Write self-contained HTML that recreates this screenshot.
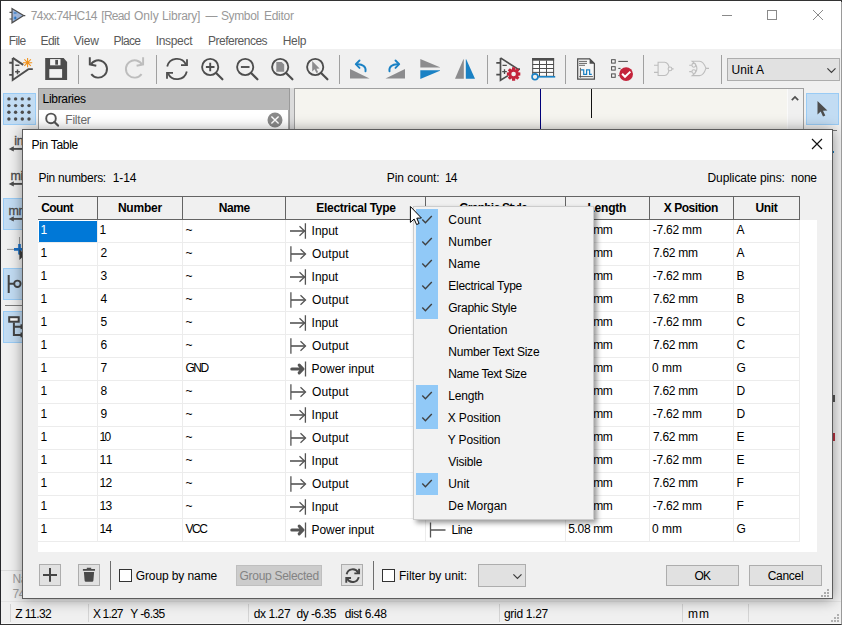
<!DOCTYPE html><html><head><meta charset="utf-8"><title>Symbol Editor</title><style>
*{box-sizing:border-box;margin:0;padding:0}
html,body{width:842px;height:625px;overflow:hidden;background:#f0f0f0}
body{position:relative;font-family:"Liberation Sans",sans-serif;font-size:12px;color:#000;line-height:14px}
.a{position:absolute}
.t{position:absolute;white-space:pre;line-height:14px;height:14px}
.b{font-weight:bold}
svg{position:absolute;overflow:visible}
</style></head><body>
<div class="a" style="left:1px;top:1px;width:840px;height:48px;background:#fff"></div>
<svg style="left:9px;top:8px" width="16" height="16" viewBox="0 0 16 16"><path d="M3 0.6 V14.8 L14.6 7.6 Z" fill="#9db3d6" stroke="#4d4d4d" stroke-width="1.2"/><path d="M0.5 4.4 H3 M0.5 11 H3 M14.6 7.6 H16.3" stroke="#4d4d4d" stroke-width="1.1"/><path d="M4.8 5 H7.6 M4.8 10 H7.6 M6.2 8.6 V11.4" stroke="#1a6fc4" stroke-width="1.1"/></svg>
<div class="t" style="left:30.80px;top:9.0px;letter-spacing:-0.610px;color:#999">74xx:74HC14</div>
<div class="t" style="left:101.30px;top:9.0px;letter-spacing:-0.750px;color:#999">[Read</div>
<div class="t" style="left:133.90px;top:9.0px;letter-spacing:0.100px;color:#999">Only</div>
<div class="t" style="left:162.10px;top:9.0px;letter-spacing:-0.243px;color:#999">Library]</div>
<div class="t" style="left:205.40px;top:9.0px;color:#999">—</div>
<div class="t" style="left:220.90px;top:9.0px;letter-spacing:-0.340px;color:#999">Symbol</div>
<div class="t" style="left:264.00px;top:9.0px;letter-spacing:-0.280px;color:#999">Editor</div>
<div class="t" style="left:8.70px;top:34.0px;letter-spacing:-0.633px;color:#5a5a5a">File</div>
<div class="t" style="left:40.50px;top:34.0px;letter-spacing:-0.533px;color:#5a5a5a">Edit</div>
<div class="t" style="left:73.70px;top:34.0px;letter-spacing:-0.167px;color:#5a5a5a">View</div>
<div class="t" style="left:113.60px;top:34.0px;letter-spacing:-0.650px;color:#5a5a5a">Place</div>
<div class="t" style="left:155.70px;top:34.0px;letter-spacing:-0.317px;color:#5a5a5a">Inspect</div>
<div class="t" style="left:208.00px;top:34.0px;letter-spacing:-0.510px;color:#5a5a5a">Preferences</div>
<div class="t" style="left:282.70px;top:34.0px;letter-spacing:-0.300px;color:#5a5a5a">Help</div>
<svg style="left:722px;top:10px" width="12" height="12" viewBox="0 0 12 12"><path d="M0 5.5 H10" stroke="#8a8a8a" stroke-width="1"/></svg>
<svg style="left:767px;top:10px" width="12" height="12" viewBox="0 0 12 12"><rect x="0.5" y="0.5" width="9" height="9" fill="none" stroke="#8a8a8a" stroke-width="1"/></svg>
<svg style="left:813px;top:10px" width="12" height="12" viewBox="0 0 12 12"><path d="M0 0 L10 10 M10 0 L0 10" stroke="#8a8a8a" stroke-width="1"/></svg>
<div class="a" style="left:1px;top:49px;width:840px;height:39px;background:#f0f0f0"></div>
<div class="a" style="left:78px;top:55px;width:1px;height:29px;background:#a0a0a0"></div>
<div class="a" style="left:156px;top:55px;width:1px;height:29px;background:#a0a0a0"></div>
<div class="a" style="left:339px;top:55px;width:1px;height:29px;background:#a0a0a0"></div>
<div class="a" style="left:487px;top:55px;width:1px;height:29px;background:#a0a0a0"></div>
<div class="a" style="left:565px;top:55px;width:1px;height:29px;background:#a0a0a0"></div>
<div class="a" style="left:643px;top:55px;width:1px;height:29px;background:#a0a0a0"></div>
<div class="a" style="left:721px;top:55px;width:1px;height:29px;background:#a0a0a0"></div>
<svg style="left:9px;top:57px" width="24" height="24" viewBox="0 0 24 24"><g fill="none" stroke="#4d4d4d" stroke-width="1.9" stroke-linejoin="miter"><path d="M3.7 0.9 V23 L19.4 12.1 H23.8"/><path d="M3.7 0.9 L14.2 7.9"/><path d="M0.2 5.8 H3.7 M0.2 17.9 H3.7"/></g><g stroke="#4d4d4d" stroke-width="1.5"><path d="M6.3 8.3 H10.4 M6.1 14.8 H10.9 M8.5 12.4 V17.2"/></g><circle cx="18.6" cy="5.7" r="2.2" fill="#f0f0f0"/><g stroke="#f09018" stroke-width="1.05"><path d="M18.6 1.1 V10.3 M14 5.7 H23.2 M15.35 2.45 L21.85 8.95 M21.85 2.45 L15.35 8.95"/></g></svg>
<svg style="left:44px;top:57px" width="24" height="24" viewBox="0 0 24 24"><path fill="#4d4d4d" d="M1.2 1 H19.6 L23.1 5 V22.9 H1.2 Z"/><rect x="5.3" y="12.1" width="12.8" height="8.7" fill="#f2f2f2"/><rect x="6.1" y="2.1" width="10.4" height="6.2" fill="#f2f2f2"/><rect x="11.25" y="2.9" width="2.75" height="4.8" fill="#4d4d4d"/></svg>
<svg style="left:87px;top:57px" width="24" height="24" viewBox="0 0 24 24"><g fill="none" stroke="#4d4d4d" stroke-width="1.95"><path d="M3.6 7.9 A8.7 8.7 0 1 1 4.3 17.1"/><path d="M2.8 0.2 V7.5 L9.3 8.8"/></g></svg>
<svg style="left:122px;top:57px" width="24" height="24" viewBox="0 0 24 24"><g transform="translate(23.9,0) scale(-1,1)" fill="none" stroke="#bdbdbd" stroke-width="1.95"><path d="M3.6 7.9 A8.7 8.7 0 1 1 4.3 17.1"/><path d="M2.8 0.2 V7.5 L9.3 8.8"/></g></svg>
<svg style="left:165px;top:57px" width="24" height="24" viewBox="0 0 24 24"><g fill="none" stroke="#4d4d4d" stroke-width="1.8"><path d="M2.2 9.5 A10 10 0 0 1 21 7.6"/><path d="M22 2.2 V8.2 H16"/><path d="M21.8 14.5 A10 10 0 0 1 3 16.4"/><path d="M2 21.8 V15.8 H8"/></g></svg>
<svg style="left:200px;top:57px" width="24" height="24" viewBox="0 0 24 24"><circle cx="10.2" cy="10" r="8.1" fill="none" stroke="#4d4d4d" stroke-width="1.85"/><path d="M16.1 16 L22.4 22.3" stroke="#4d4d4d" stroke-width="2.2" stroke-linecap="round"/><path d="M5.9 10 H14.5 M10.2 5.7 V14.3" stroke="#4d4d4d" stroke-width="1.9"/></svg>
<svg style="left:235px;top:57px" width="24" height="24" viewBox="0 0 24 24"><circle cx="10.2" cy="10" r="8.1" fill="none" stroke="#4d4d4d" stroke-width="1.85"/><path d="M16.1 16 L22.4 22.3" stroke="#4d4d4d" stroke-width="2.2" stroke-linecap="round"/><path d="M5.9 10 H14.5" stroke="#4d4d4d" stroke-width="1.9"/></svg>
<svg style="left:270px;top:57px" width="24" height="24" viewBox="0 0 24 24"><circle cx="10.2" cy="10" r="8.1" fill="none" stroke="#4d4d4d" stroke-width="1.85"/><path d="M16.1 16 L22.4 22.3" stroke="#4d4d4d" stroke-width="2.2" stroke-linecap="round"/><path d="M6.3 5 H11.6 L14.2 7.6 V14.8 H6.3 Z" fill="#8c8c8e"/></svg>
<svg style="left:305px;top:57px" width="24" height="24" viewBox="0 0 24 24"><circle cx="10.2" cy="10" r="8.1" fill="none" stroke="#4d4d4d" stroke-width="1.85"/><path d="M16.1 16 L22.4 22.3" stroke="#4d4d4d" stroke-width="2.2" stroke-linecap="round"/><path d="M7.2 4.1 L7.2 14.5 L9.6 12.3 L11.4 16.1 L13.2 15.3 L11.4 11.7 L14.6 11.5 Z" fill="#8c8c8e"/></svg>
<svg style="left:348px;top:57px" width="24" height="24" viewBox="0 0 24 24"><g><path d="M2 12 V21.5 H21.5 Z" fill="#8c8c8e"/><path d="M17.5 14.4 C18.4 10 14.5 7 9.5 7.2" fill="none" stroke="#1a81c4" stroke-width="1.9" stroke-linecap="round"/><path d="M11.5 3.5 L7.8 7.2 L11.5 10.9" fill="none" stroke="#1a81c4" stroke-width="1.9" stroke-linecap="round" stroke-linejoin="round"/></g></svg>
<svg style="left:383px;top:57px" width="24" height="24" viewBox="0 0 24 24"><g transform="translate(24,0) scale(-1,1)"><path d="M2 12 V21.5 H21.5 Z" fill="#8c8c8e"/><path d="M17.5 14.4 C18.4 10 14.5 7 9.5 7.2" fill="none" stroke="#1a81c4" stroke-width="1.9" stroke-linecap="round"/><path d="M11.5 3.5 L7.8 7.2 L11.5 10.9" fill="none" stroke="#1a81c4" stroke-width="1.9" stroke-linecap="round" stroke-linejoin="round"/></g></svg>
<svg style="left:418px;top:57px" width="24" height="24" viewBox="0 0 24 24"><path d="M2.3 2 L22 10.2 V10.6 H2.3 Z" fill="#8c8c8e"/><path d="M2.3 13.3 H22 V13.7 L2.3 21.9 Z" fill="#1a81c4"/></svg>
<svg style="left:453px;top:57px" width="24" height="24" viewBox="0 0 24 24"><path d="M2 21.7 H10.8 V2.3 H10.4 Z" fill="#8c8c8e"/><path d="M12.8 2.3 H13.2 L22 21.7 H12.8 Z" fill="#1a81c4"/></svg>
<svg style="left:496px;top:57px" width="24" height="24" viewBox="0 0 24 24"><g fill="none" stroke="#4d4d4d" stroke-width="1.7"><path d="M4.5 0.9 V23.2 L12 18.6 M4.5 0.9 L22 12.1 H24"/><path d="M0.3 5.8 H4.5 M0.3 17.7 H4.5"/></g><g stroke="#4d4d4d" stroke-width="1.3"><path d="M6.5 8.3 H10.8 M6.2 14.6 H10.8 M8.5 12.3 V16.9"/></g><path d="M24.32 15.43 L24.32 18.57 L22.37 18.63 L22.12 19.22 L23.46 20.64 L21.24 22.86 L19.82 21.52 L19.23 21.77 L19.17 23.72 L16.03 23.72 L15.97 21.77 L15.38 21.52 L13.96 22.86 L11.74 20.64 L13.08 19.22 L12.83 18.63 L10.88 18.57 L10.88 15.43 L12.83 15.37 L13.08 14.78 L11.74 13.36 L13.96 11.14 L15.38 12.48 L15.97 12.23 L16.03 10.28 L19.17 10.28 L19.23 12.23 L19.82 12.48 L21.24 11.14 L23.46 13.36 L22.12 14.78 L22.37 15.37 Z" fill="#c4243b"/><circle cx="17.6" cy="17" r="2.3" fill="#f0f0f0"/></svg>
<svg style="left:531px;top:57px" width="24" height="24" viewBox="0 0 24 24"><rect x="1.7" y="1.5" width="20.9" height="17.8" fill="#fbfbfb" stroke="#4d4d4d" stroke-width="1"/><rect x="1.2" y="1" width="21.9" height="2.7" fill="#4d4d4d"/><path d="M1.5 7.5 H23 M1.5 11.5 H23 M1.5 15.4 H23 M8.5 3.5 V19 M15.5 3.5 V19" fill="none" stroke="#4d4d4d" stroke-width="1"/><path d="M6.5 19.8 H24.2" stroke="#1a81c4" stroke-width="1.6"/><circle cx="4" cy="19.8" r="2.95" fill="#eeeeee" stroke="#1a81c4" stroke-width="1.6"/></svg>
<svg style="left:574px;top:57px" width="24" height="24" viewBox="0 0 24 24"><path d="M3.7 1.8 H15.7 L20.4 6.5 V22.1 H3.7 Z" fill="#f6f6f6" stroke="#4d4d4d" stroke-width="1.25"/><path d="M15.6 1.4 L21 6.8 H15.6 Z" fill="#4d4d4d"/><path d="M5 4.4 H13 M5 6.4 H13 M5 8.3 H11" stroke="#4d4d4d" stroke-width="0.85"/><path d="M6.4 10.8 V20.7 M5.2 19.6 H18.9" fill="none" stroke="#4d4d4d" stroke-width="0.9"/><path d="M7 12.9 H9.7 V17.4 H12.6 V12.9 H15.6 V17.4 H17.8" fill="none" stroke="#1a81c4" stroke-width="1.2"/></svg>
<svg style="left:609px;top:57px" width="24" height="24" viewBox="0 0 24 24"><g fill="#f8f8f8" stroke="#4d4d4d" stroke-width="1"><rect x="2.6" y="2.7" width="3.6" height="3.4"/><rect x="2.6" y="9.7" width="3.6" height="3.4"/><rect x="2.6" y="16.9" width="3.6" height="3.4"/><path d="M9.3 4.4 H18.9 M9.3 11.4 H11.5 M9.3 18.6 H10.5"/></g><circle cx="17.1" cy="17.1" r="6.9" fill="#c4243b"/><path d="M13.1 16.8 L16 19.8 L21.4 14.6" fill="none" stroke="#fff" stroke-width="2"/></svg>
<svg style="left:652px;top:57px" width="24" height="24" viewBox="0 0 24 24"><g fill="none" stroke="#bdbdbd" stroke-width="1.1"><path d="M6.1 5.2 H12.6 A4.6 6.65 0 0 1 12.6 18.5 H6.1 Z"/><path d="M2 8.3 H6.1 M2 15.4 H6.1 M19.9 11.9 H21.6"/><circle cx="18" cy="11.9" r="1.9" fill="#f0f0f0"/></g></svg>
<svg style="left:687px;top:57px" width="24" height="24" viewBox="0 0 24 24"><g fill="none" stroke="#bdbdbd" stroke-width="1.1"><path d="M5.2 4.2 H12.5 C15.5 4.2 17.8 8 18.9 11.4 C17.8 14.9 15.5 18.6 12.5 18.6 H5.2 Q14.6 11.4 5.2 4.2 Z"/><path d="M2.2 8.3 H4.9 M2.2 14.6 H4.9 M18.9 11.4 H22"/><circle cx="6.8" cy="8.3" r="1.9" fill="#f0f0f0"/><circle cx="6.8" cy="14.6" r="1.9" fill="#f0f0f0"/></g></svg>
<div class="a" style="left:727px;top:58px;width:113px;height:23px;background:#e1e1e1;border:1px solid #adadad"></div>
<div class="t" style="left:731.60px;top:63.0px;letter-spacing:0.080px;">Unit A</div>
<svg style="left:826.7px;top:67.5px" width="9" height="6" viewBox="0 0 9 6"><path d="M0.4 0.4 L4.45 4.5 L8.5 0.4" fill="none" stroke="#3c3c3c" stroke-width="1.2"/></svg>
<div class="a" style="left:3px;top:93px;width:33px;height:32px;background:#c2dcf3;border:1px solid #99cbf5"></div>
<svg style="left:6px;top:95px" width="28" height="28" viewBox="0 0 28 28"><circle cx="2.9" cy="3.9" r="1.7" fill="#4d4d4d"/><circle cx="2.9" cy="10.6" r="1.7" fill="#4d4d4d"/><circle cx="2.9" cy="17.3" r="1.7" fill="#4d4d4d"/><circle cx="2.9" cy="24.0" r="1.7" fill="#4d4d4d"/><circle cx="9.6" cy="3.9" r="1.7" fill="#4d4d4d"/><circle cx="9.6" cy="10.6" r="1.7" fill="#4d4d4d"/><circle cx="9.6" cy="17.3" r="1.7" fill="#4d4d4d"/><circle cx="9.6" cy="24.0" r="1.7" fill="#4d4d4d"/><circle cx="16.3" cy="3.9" r="1.7" fill="#4d4d4d"/><circle cx="16.3" cy="10.6" r="1.7" fill="#4d4d4d"/><circle cx="16.3" cy="17.3" r="1.7" fill="#4d4d4d"/><circle cx="16.3" cy="24.0" r="1.7" fill="#4d4d4d"/><circle cx="23.0" cy="3.9" r="1.7" fill="#4d4d4d"/><circle cx="23.0" cy="10.6" r="1.7" fill="#4d4d4d"/><circle cx="23.0" cy="17.3" r="1.7" fill="#4d4d4d"/><circle cx="23.0" cy="24.0" r="1.7" fill="#4d4d4d"/></svg>
<div class="t" style="left:14.20px;top:134.0px;letter-spacing:-0.300px;font-size:12.5px;color:#4d4d4d;-webkit-text-stroke:0.3px #4d4d4d">inch</div>
<svg style="left:8px;top:146px" width="20" height="7" viewBox="0 0 20 7"><path d="M3 2.9 H20" stroke="#4d4d4d" stroke-width="1.9"/><path d="M5.8 0.3 L0.7 2.9 L5.8 5.5 Z" fill="#4d4d4d"/></svg>
<div class="t" style="left:10.50px;top:169.0px;letter-spacing:-0.300px;font-size:12.5px;color:#4d4d4d;-webkit-text-stroke:0.3px #4d4d4d">mil</div>
<svg style="left:8px;top:181px" width="20" height="7" viewBox="0 0 20 7"><path d="M3 2.9 H20" stroke="#4d4d4d" stroke-width="1.9"/><path d="M5.8 0.3 L0.7 2.9 L5.8 5.5 Z" fill="#4d4d4d"/></svg>
<div class="a" style="left:3px;top:198px;width:33px;height:32px;background:#c2dcf3;border:1px solid #99cbf5"></div>
<div class="t" style="left:8.50px;top:204.0px;letter-spacing:-0.300px;font-size:12.5px;color:#4d4d4d;-webkit-text-stroke:0.3px #4d4d4d">mm</div>
<svg style="left:8px;top:216px" width="20" height="7" viewBox="0 0 20 7"><path d="M3 2.9 H20" stroke="#4d4d4d" stroke-width="1.9"/><path d="M5.8 0.3 L0.7 2.9 L5.8 5.5 Z" fill="#4d4d4d"/></svg>
<svg style="left:6px;top:236px" width="24" height="24" viewBox="0 0 24 24"><path d="M1 13.4 H20 M13.5 1 V19" stroke="#8c8c8c" stroke-width="0.9"/><path d="M8 13.4 H19 M13.5 8 V18.5" stroke="#1a6fc4" stroke-width="2.6"/><path d="M13.4 13.6 V24 L16 21.5 L18 25.5 L20 24.5 L18.2 20.8 L21.5 20.6 Z" fill="#3c3c3c"/></svg>
<div class="a" style="left:3px;top:268px;width:33px;height:32px;background:#c2dcf3;border:1px solid #99cbf5"></div>
<svg style="left:6px;top:272px" width="24" height="24" viewBox="0 0 24 24"><path d="M2.7 3 V21 M2.7 11.8 H8" stroke="#444" stroke-width="2" fill="none"/><circle cx="11.4" cy="11.8" r="3.2" fill="none" stroke="#444" stroke-width="1.9"/></svg>
<div class="a" style="left:5px;top:305px;width:28px;height:1px;background:#7a7a7a"></div>
<div class="a" style="left:3px;top:311px;width:33px;height:32px;background:#c2dcf3;border:1px solid #99cbf5"></div>
<svg style="left:6px;top:314px" width="24" height="24" viewBox="0 0 24 24"><rect x="3.2" y="3.2" width="9.5" height="4.5" fill="#fff" stroke="#444" stroke-width="2"/><path d="M7.9 8.5 V20.9 H15 M7.9 12.7 H15" stroke="#444" stroke-width="2" fill="none"/><rect x="14.5" y="10.3" width="6" height="4.8" fill="#444"/><rect x="14.5" y="18.5" width="6" height="4.8" fill="#444"/></svg>
<div class="a" style="left:38px;top:88px;width:252px;height:60px;background:#b9b9b9;border:1px solid #9a9a9a"></div>
<div class="t" style="left:42.60px;top:92.0px;letter-spacing:-0.325px;">Libraries</div>
<div class="a" style="left:39px;top:110px;width:250px;height:40px;background:#fff"></div>
<svg style="left:44px;top:112px" width="16" height="16" viewBox="0 0 16 16"><circle cx="7" cy="6.4" r="4.8" fill="none" stroke="#555" stroke-width="1.9"/><path d="M10.4 9.9 L14 13.6" stroke="#555" stroke-width="2.2" stroke-linecap="round"/></svg>
<div class="t" style="left:65.30px;top:113.0px;letter-spacing:-0.220px;color:#6d6d6d">Filter</div>
<svg style="left:266.6px;top:112.3px" width="16" height="16" viewBox="0 0 16 16"><circle cx="8" cy="8" r="7.5" fill="#8a8a8a"/><path d="M4.4 4.4 L11.6 11.6 M11.6 4.4 L4.4 11.6" stroke="#fff" stroke-width="1.4"/></svg>
<div class="a" style="left:288px;top:110px;width:1px;height:20px;background:#a8a8a8"></div>
<div class="a" style="left:290px;top:88px;width:4px;height:60px;background:#dcdcdc"></div>
<div class="a" style="left:294px;top:88px;width:510px;height:500px;background:#f5f4ef;border:1px solid #a0a0a0"></div>
<div class="a" style="left:540px;top:89px;width:1px;height:60px;background:#00007a;width:1.3px"></div>
<div class="a" style="left:591px;top:89px;width:1px;height:29px;background:#111;width:1.3px"></div>
<div class="a" style="left:787px;top:89px;width:16px;height:480px;background:#f0f0f0;border-left:1px solid #fafafa"></div>
<svg style="left:791px;top:95px" width="8" height="7" viewBox="0 0 8 7"><path d="M0.8 5.2 L4 2 L7.2 5.2" fill="none" stroke="#505050" stroke-width="1.7"/></svg>
<div class="a" style="left:806px;top:93px;width:33px;height:32px;background:#c2dcf3;border:1px solid #99cbf5"></div>
<svg style="left:811px;top:97px" width="24" height="24" viewBox="0 0 24 24"><path d="M6.5 4 V17.6 L9.7 14.6 L12 19.6 L14.3 18.6 L12 13.8 L16.4 13.6 Z" fill="#4d4d4d"/></svg>
<div class="a" style="left:833px;top:130px;width:4px;height:1px;background:#777"></div>
<div class="a" style="left:833px;top:151px;width:1px;height:2px;background:#1a81c4"></div>
<div class="a" style="left:833px;top:395px;width:2px;height:7px;background:#555"></div>
<div class="a" style="left:833px;top:433px;width:2px;height:8px;background:#b8323f"></div>
<div class="t" style="left:12.50px;top:572.0px;letter-spacing:-0.300px;color:#a0a0a0">Name</div>
<div class="t" style="left:12.50px;top:587.0px;letter-spacing:-0.300px;color:#a0a0a0">74HC14</div>
<div class="a" style="left:1px;top:570px;width:21px;height:1px;background:#dcdcdc"></div>
<div class="a" style="left:1px;top:601px;width:840px;height:1px;background:#e4e4e4"></div>
<div class="a" style="left:1px;top:602px;width:840px;height:22px;background:#f0f0f0"></div>
<div class="a" style="left:10px;top:604px;width:1px;height:18px;background:#d4d4d4"></div>
<div class="a" style="left:88px;top:604px;width:1px;height:18px;background:#d4d4d4"></div>
<div class="a" style="left:248px;top:604px;width:1px;height:18px;background:#d4d4d4"></div>
<div class="a" style="left:499px;top:604px;width:1px;height:18px;background:#d4d4d4"></div>
<div class="a" style="left:682px;top:604px;width:1px;height:18px;background:#d4d4d4"></div>
<div class="a" style="left:748px;top:604px;width:1px;height:18px;background:#d4d4d4"></div>
<div class="t" style="left:15.30px;top:607.0px;letter-spacing:-0.567px;">Z 11.32</div>
<div class="t" style="left:92.90px;top:607.0px;letter-spacing:-0.820px;">X 1.27</div>
<div class="t" style="left:130.30px;top:607.0px;letter-spacing:-0.600px;">Y -6.35</div>
<div class="t" style="left:253.70px;top:607.0px;letter-spacing:-0.417px;">dx 1.27</div>
<div class="t" style="left:296.50px;top:607.0px;letter-spacing:-0.486px;">dy -6.35</div>
<div class="t" style="left:344.70px;top:607.0px;letter-spacing:-0.387px;">dist 6.48</div>
<div class="t" style="left:504.00px;top:607.0px;letter-spacing:-0.312px;">grid 1.27</div>
<div class="t" style="left:688.00px;top:607.0px;letter-spacing:1.000px;">mm</div>
<svg style="left:831px;top:614px" width="8" height="8" viewBox="0 0 8 8"><rect x="6" y="0" width="2" height="2" fill="#b0b0b0"/><rect x="3" y="3" width="2" height="2" fill="#b0b0b0"/><rect x="6" y="3" width="2" height="2" fill="#b0b0b0"/><rect x="0" y="6" width="2" height="2" fill="#b0b0b0"/><rect x="3" y="6" width="2" height="2" fill="#b0b0b0"/><rect x="6" y="6" width="2" height="2" fill="#b0b0b0"/></svg>
<div class="a" style="left:22px;top:129px;width:811px;height:470px;background:#f0f0f0;border:1px solid #5c5c5c;box-shadow:0 1px 13px rgba(0,0,0,0.40)"></div>
<div class="a" style="left:23px;top:130px;width:809px;height:30px;background:#fff"></div>
<div class="t" style="left:31.60px;top:138.0px;letter-spacing:-0.325px;">Pin Table</div>
<svg style="left:811px;top:138px" width="12" height="12" viewBox="0 0 12 12"><path d="M1 1 L11 11 M11 1 L1 11" stroke="#111" stroke-width="1.15"/></svg>
<div class="t" style="left:38.50px;top:171.0px;letter-spacing:-0.273px;">Pin numbers:</div>
<div class="t" style="left:112.80px;top:171.0px;letter-spacing:-0.167px;">1-14</div>
<div class="t" style="left:386.70px;top:171.0px;letter-spacing:-0.044px;">Pin count:</div>
<div class="t" style="left:445.00px;top:171.0px;letter-spacing:-1.000px;">14</div>
<div class="t" style="left:707.50px;top:171.0px;letter-spacing:-0.093px;">Duplicate pins:</div>
<div class="t" style="left:791.10px;top:171.0px;letter-spacing:-0.267px;">none</div>
<div class="a" style="left:38px;top:220px;width:779px;height:332px;background:#fff"></div>
<div class="a" style="left:38px;top:196px;width:762px;height:24px;background:#f0f0f0;border-top:1px solid #646464;border-bottom:1px solid #646464"></div>
<div class="a" style="left:97px;top:196px;width:1px;height:24px;background:#646464"></div>
<div class="a" style="left:182px;top:196px;width:1px;height:24px;background:#646464"></div>
<div class="a" style="left:285px;top:196px;width:1px;height:24px;background:#646464"></div>
<div class="a" style="left:425px;top:196px;width:1px;height:24px;background:#646464"></div>
<div class="a" style="left:565px;top:196px;width:1px;height:24px;background:#646464"></div>
<div class="a" style="left:649px;top:196px;width:1px;height:24px;background:#646464"></div>
<div class="a" style="left:733px;top:196px;width:1px;height:24px;background:#646464"></div>
<div class="a" style="left:799px;top:196px;width:1px;height:24px;background:#646464"></div>
<div class="t b" style="left:41.30px;top:201.0px;letter-spacing:-0.625px;">Count</div>
<div class="t b" style="left:117.90px;top:201.0px;letter-spacing:-0.220px;">Number</div>
<div class="t b" style="left:218.80px;top:201.0px;letter-spacing:-0.467px;">Name</div>
<div class="t b" style="left:316.30px;top:201.0px;letter-spacing:-0.300px;">Electrical Type</div>
<div class="t b" style="left:459.20px;top:201.0px;letter-spacing:-0.733px;">Graphic Style</div>
<div class="t b" style="left:587.50px;top:201.0px;letter-spacing:-0.220px;">Length</div>
<div class="t b" style="left:663.80px;top:201.0px;letter-spacing:-0.467px;">X Position</div>
<div class="t b" style="left:755.50px;top:201.0px;letter-spacing:-0.333px;">Unit</div>
<div class="a" style="left:38px;top:242px;width:762px;height:1px;background:#ececec"></div>
<div class="a" style="left:38px;top:265px;width:762px;height:1px;background:#ececec"></div>
<div class="a" style="left:38px;top:288px;width:762px;height:1px;background:#ececec"></div>
<div class="a" style="left:38px;top:311px;width:762px;height:1px;background:#ececec"></div>
<div class="a" style="left:38px;top:334px;width:762px;height:1px;background:#ececec"></div>
<div class="a" style="left:38px;top:357px;width:762px;height:1px;background:#ececec"></div>
<div class="a" style="left:38px;top:380px;width:762px;height:1px;background:#ececec"></div>
<div class="a" style="left:38px;top:403px;width:762px;height:1px;background:#ececec"></div>
<div class="a" style="left:38px;top:426px;width:762px;height:1px;background:#ececec"></div>
<div class="a" style="left:38px;top:449px;width:762px;height:1px;background:#ececec"></div>
<div class="a" style="left:38px;top:472px;width:762px;height:1px;background:#ececec"></div>
<div class="a" style="left:38px;top:495px;width:762px;height:1px;background:#ececec"></div>
<div class="a" style="left:38px;top:518px;width:762px;height:1px;background:#ececec"></div>
<div class="a" style="left:38px;top:541px;width:762px;height:1px;background:#ececec"></div>
<div class="a" style="left:97px;top:220px;width:1px;height:322px;background:#ececec"></div>
<div class="a" style="left:182px;top:220px;width:1px;height:322px;background:#ececec"></div>
<div class="a" style="left:285px;top:220px;width:1px;height:322px;background:#ececec"></div>
<div class="a" style="left:425px;top:220px;width:1px;height:322px;background:#ececec"></div>
<div class="a" style="left:565px;top:220px;width:1px;height:322px;background:#ececec"></div>
<div class="a" style="left:649px;top:220px;width:1px;height:322px;background:#ececec"></div>
<div class="a" style="left:733px;top:220px;width:1px;height:322px;background:#ececec"></div>
<div class="a" style="left:799px;top:220px;width:1px;height:322px;background:#ececec"></div>
<div class="a" style="left:39px;top:221px;width:58px;height:21px;background:#0078d7"></div>
<div class="t" style="left:40.60px;top:223.0px;color:#fff">1</div>
<div class="t" style="left:99.50px;top:223.0px;">1</div>
<div class="t" style="left:185.60px;top:223.0px;">~</div>
<svg style="left:290px;top:223px" width="16" height="16" viewBox="0 0 16 16"><path d="M0 8 H14.6" fill="none" stroke="#555" stroke-width="1.6"/><path d="M9.5 3.3 L14.5 8 L9.5 12.7 M15.4 0.2 V15.8" fill="none" stroke="#555" stroke-width="1.3"/></svg>
<div class="t" style="left:311.60px;top:224.0px;letter-spacing:-0.025px;">Input</div>
<svg style="left:430px;top:223px" width="16" height="16" viewBox="0 0 16 16"><path d="M0.5 0.5 V15.5 M0.5 8 H15.5" fill="none" stroke="#555" stroke-width="1.3"/></svg>
<div class="t" style="left:451.60px;top:224.0px;letter-spacing:-0.533px;">Line</div>
<div class="t" style="left:568.30px;top:223.0px;letter-spacing:-0.367px;">5.08 mm</div>
<div class="t" style="left:652.80px;top:223.0px;letter-spacing:-0.229px;">-7.62 mm</div>
<div class="t" style="left:736.50px;top:223.0px;">A</div>
<div class="t" style="left:40.60px;top:246.0px;">1</div>
<div class="t" style="left:100.50px;top:246.0px;">2</div>
<div class="t" style="left:185.60px;top:246.0px;">~</div>
<svg style="left:290px;top:246px" width="16" height="16" viewBox="0 0 16 16"><path d="M1 8 H15.3" fill="none" stroke="#555" stroke-width="1.6"/><path d="M0.9 0.2 V15.8 M10.5 3.3 L15.5 8 L10.5 12.7" fill="none" stroke="#555" stroke-width="1.3"/></svg>
<div class="t" style="left:312.00px;top:247.0px;letter-spacing:0.100px;">Output</div>
<svg style="left:430px;top:246px" width="16" height="16" viewBox="0 0 16 16"><path d="M0.5 0.5 V15.5 M0.5 8 H15.5" fill="none" stroke="#555" stroke-width="1.3"/></svg>
<div class="t" style="left:451.60px;top:247.0px;letter-spacing:-0.533px;">Line</div>
<div class="t" style="left:568.30px;top:246.0px;letter-spacing:-0.367px;">5.08 mm</div>
<div class="t" style="left:653.00px;top:246.0px;letter-spacing:-0.300px;">7.62 mm</div>
<div class="t" style="left:736.50px;top:246.0px;">A</div>
<div class="t" style="left:40.60px;top:269.0px;">1</div>
<div class="t" style="left:100.50px;top:269.0px;">3</div>
<div class="t" style="left:185.60px;top:269.0px;">~</div>
<svg style="left:290px;top:269px" width="16" height="16" viewBox="0 0 16 16"><path d="M0 8 H14.6" fill="none" stroke="#555" stroke-width="1.6"/><path d="M9.5 3.3 L14.5 8 L9.5 12.7 M15.4 0.2 V15.8" fill="none" stroke="#555" stroke-width="1.3"/></svg>
<div class="t" style="left:311.60px;top:270.0px;letter-spacing:-0.025px;">Input</div>
<svg style="left:430px;top:269px" width="16" height="16" viewBox="0 0 16 16"><path d="M0.5 0.5 V15.5 M0.5 8 H15.5" fill="none" stroke="#555" stroke-width="1.3"/></svg>
<div class="t" style="left:451.60px;top:270.0px;letter-spacing:-0.533px;">Line</div>
<div class="t" style="left:568.30px;top:269.0px;letter-spacing:-0.367px;">5.08 mm</div>
<div class="t" style="left:652.80px;top:269.0px;letter-spacing:-0.229px;">-7.62 mm</div>
<div class="t" style="left:736.50px;top:269.0px;">B</div>
<div class="t" style="left:40.60px;top:292.0px;">1</div>
<div class="t" style="left:100.50px;top:292.0px;">4</div>
<div class="t" style="left:185.60px;top:292.0px;">~</div>
<svg style="left:290px;top:292px" width="16" height="16" viewBox="0 0 16 16"><path d="M1 8 H15.3" fill="none" stroke="#555" stroke-width="1.6"/><path d="M0.9 0.2 V15.8 M10.5 3.3 L15.5 8 L10.5 12.7" fill="none" stroke="#555" stroke-width="1.3"/></svg>
<div class="t" style="left:312.00px;top:293.0px;letter-spacing:0.100px;">Output</div>
<svg style="left:430px;top:292px" width="16" height="16" viewBox="0 0 16 16"><path d="M0.5 0.5 V15.5 M0.5 8 H15.5" fill="none" stroke="#555" stroke-width="1.3"/></svg>
<div class="t" style="left:451.60px;top:293.0px;letter-spacing:-0.533px;">Line</div>
<div class="t" style="left:568.30px;top:292.0px;letter-spacing:-0.367px;">5.08 mm</div>
<div class="t" style="left:653.00px;top:292.0px;letter-spacing:-0.300px;">7.62 mm</div>
<div class="t" style="left:736.50px;top:292.0px;">B</div>
<div class="t" style="left:40.60px;top:315.0px;">1</div>
<div class="t" style="left:100.50px;top:315.0px;">5</div>
<div class="t" style="left:185.60px;top:315.0px;">~</div>
<svg style="left:290px;top:315px" width="16" height="16" viewBox="0 0 16 16"><path d="M0 8 H14.6" fill="none" stroke="#555" stroke-width="1.6"/><path d="M9.5 3.3 L14.5 8 L9.5 12.7 M15.4 0.2 V15.8" fill="none" stroke="#555" stroke-width="1.3"/></svg>
<div class="t" style="left:311.60px;top:316.0px;letter-spacing:-0.025px;">Input</div>
<svg style="left:430px;top:315px" width="16" height="16" viewBox="0 0 16 16"><path d="M0.5 0.5 V15.5 M0.5 8 H15.5" fill="none" stroke="#555" stroke-width="1.3"/></svg>
<div class="t" style="left:451.60px;top:316.0px;letter-spacing:-0.533px;">Line</div>
<div class="t" style="left:568.30px;top:315.0px;letter-spacing:-0.367px;">5.08 mm</div>
<div class="t" style="left:652.80px;top:315.0px;letter-spacing:-0.229px;">-7.62 mm</div>
<div class="t" style="left:736.50px;top:315.0px;">C</div>
<div class="t" style="left:40.60px;top:338.0px;">1</div>
<div class="t" style="left:100.50px;top:338.0px;">6</div>
<div class="t" style="left:185.60px;top:338.0px;">~</div>
<svg style="left:290px;top:338px" width="16" height="16" viewBox="0 0 16 16"><path d="M1 8 H15.3" fill="none" stroke="#555" stroke-width="1.6"/><path d="M0.9 0.2 V15.8 M10.5 3.3 L15.5 8 L10.5 12.7" fill="none" stroke="#555" stroke-width="1.3"/></svg>
<div class="t" style="left:312.00px;top:339.0px;letter-spacing:0.100px;">Output</div>
<svg style="left:430px;top:338px" width="16" height="16" viewBox="0 0 16 16"><path d="M0.5 0.5 V15.5 M0.5 8 H15.5" fill="none" stroke="#555" stroke-width="1.3"/></svg>
<div class="t" style="left:451.60px;top:339.0px;letter-spacing:-0.533px;">Line</div>
<div class="t" style="left:568.30px;top:338.0px;letter-spacing:-0.367px;">5.08 mm</div>
<div class="t" style="left:653.00px;top:338.0px;letter-spacing:-0.300px;">7.62 mm</div>
<div class="t" style="left:736.50px;top:338.0px;">C</div>
<div class="t" style="left:40.60px;top:361.0px;">1</div>
<div class="t" style="left:100.50px;top:361.0px;">7</div>
<div class="t" style="left:185.60px;top:361.0px;letter-spacing:-1.600px;">GND</div>
<svg style="left:290px;top:361px" width="16" height="16" viewBox="0 0 16 16"><path d="M1.8 8 H12.4 M9.2 4.2 L13 8 L9.2 11.8" fill="none" stroke="#555" stroke-width="3.1" stroke-linecap="round" stroke-linejoin="round"/><path d="M15.5 0.5 V15.5" stroke="#555" stroke-width="1.3"/></svg>
<div class="t" style="left:311.60px;top:362.0px;letter-spacing:-0.080px;">Power input</div>
<svg style="left:430px;top:361px" width="16" height="16" viewBox="0 0 16 16"><path d="M0.5 0.5 V15.5 M0.5 8 H15.5" fill="none" stroke="#555" stroke-width="1.3"/></svg>
<div class="t" style="left:451.60px;top:362.0px;letter-spacing:-0.533px;">Line</div>
<div class="t" style="left:568.30px;top:361.0px;letter-spacing:-0.367px;">5.08 mm</div>
<div class="t" style="left:652.00px;top:361.0px;">0 mm</div>
<div class="t" style="left:736.50px;top:361.0px;">G</div>
<div class="t" style="left:40.60px;top:384.0px;">1</div>
<div class="t" style="left:100.50px;top:384.0px;">8</div>
<div class="t" style="left:185.60px;top:384.0px;">~</div>
<svg style="left:290px;top:384px" width="16" height="16" viewBox="0 0 16 16"><path d="M1 8 H15.3" fill="none" stroke="#555" stroke-width="1.6"/><path d="M0.9 0.2 V15.8 M10.5 3.3 L15.5 8 L10.5 12.7" fill="none" stroke="#555" stroke-width="1.3"/></svg>
<div class="t" style="left:312.00px;top:385.0px;letter-spacing:0.100px;">Output</div>
<svg style="left:430px;top:384px" width="16" height="16" viewBox="0 0 16 16"><path d="M0.5 0.5 V15.5 M0.5 8 H15.5" fill="none" stroke="#555" stroke-width="1.3"/></svg>
<div class="t" style="left:451.60px;top:385.0px;letter-spacing:-0.533px;">Line</div>
<div class="t" style="left:568.30px;top:384.0px;letter-spacing:-0.367px;">5.08 mm</div>
<div class="t" style="left:653.00px;top:384.0px;letter-spacing:-0.300px;">7.62 mm</div>
<div class="t" style="left:736.50px;top:384.0px;">D</div>
<div class="t" style="left:40.60px;top:407.0px;">1</div>
<div class="t" style="left:100.50px;top:407.0px;">9</div>
<div class="t" style="left:185.60px;top:407.0px;">~</div>
<svg style="left:290px;top:407px" width="16" height="16" viewBox="0 0 16 16"><path d="M0 8 H14.6" fill="none" stroke="#555" stroke-width="1.6"/><path d="M9.5 3.3 L14.5 8 L9.5 12.7 M15.4 0.2 V15.8" fill="none" stroke="#555" stroke-width="1.3"/></svg>
<div class="t" style="left:311.60px;top:408.0px;letter-spacing:-0.025px;">Input</div>
<svg style="left:430px;top:407px" width="16" height="16" viewBox="0 0 16 16"><path d="M0.5 0.5 V15.5 M0.5 8 H15.5" fill="none" stroke="#555" stroke-width="1.3"/></svg>
<div class="t" style="left:451.60px;top:408.0px;letter-spacing:-0.533px;">Line</div>
<div class="t" style="left:568.30px;top:407.0px;letter-spacing:-0.367px;">5.08 mm</div>
<div class="t" style="left:652.80px;top:407.0px;letter-spacing:-0.229px;">-7.62 mm</div>
<div class="t" style="left:736.50px;top:407.0px;">D</div>
<div class="t" style="left:40.60px;top:430.0px;">1</div>
<div class="t" style="left:99.50px;top:430.0px;letter-spacing:-1.600px;">10</div>
<div class="t" style="left:185.60px;top:430.0px;">~</div>
<svg style="left:290px;top:430px" width="16" height="16" viewBox="0 0 16 16"><path d="M1 8 H15.3" fill="none" stroke="#555" stroke-width="1.6"/><path d="M0.9 0.2 V15.8 M10.5 3.3 L15.5 8 L10.5 12.7" fill="none" stroke="#555" stroke-width="1.3"/></svg>
<div class="t" style="left:312.00px;top:431.0px;letter-spacing:0.100px;">Output</div>
<svg style="left:430px;top:430px" width="16" height="16" viewBox="0 0 16 16"><path d="M0.5 0.5 V15.5 M0.5 8 H15.5" fill="none" stroke="#555" stroke-width="1.3"/></svg>
<div class="t" style="left:451.60px;top:431.0px;letter-spacing:-0.533px;">Line</div>
<div class="t" style="left:568.30px;top:430.0px;letter-spacing:-0.367px;">5.08 mm</div>
<div class="t" style="left:653.00px;top:430.0px;letter-spacing:-0.300px;">7.62 mm</div>
<div class="t" style="left:736.50px;top:430.0px;">E</div>
<div class="t" style="left:40.60px;top:453.0px;">1</div>
<div class="t" style="left:99.50px;top:453.0px;letter-spacing:0.400px;">11</div>
<div class="t" style="left:185.60px;top:453.0px;">~</div>
<svg style="left:290px;top:453px" width="16" height="16" viewBox="0 0 16 16"><path d="M0 8 H14.6" fill="none" stroke="#555" stroke-width="1.6"/><path d="M9.5 3.3 L14.5 8 L9.5 12.7 M15.4 0.2 V15.8" fill="none" stroke="#555" stroke-width="1.3"/></svg>
<div class="t" style="left:311.60px;top:454.0px;letter-spacing:-0.025px;">Input</div>
<svg style="left:430px;top:453px" width="16" height="16" viewBox="0 0 16 16"><path d="M0.5 0.5 V15.5 M0.5 8 H15.5" fill="none" stroke="#555" stroke-width="1.3"/></svg>
<div class="t" style="left:451.60px;top:454.0px;letter-spacing:-0.533px;">Line</div>
<div class="t" style="left:568.30px;top:453.0px;letter-spacing:-0.367px;">5.08 mm</div>
<div class="t" style="left:652.80px;top:453.0px;letter-spacing:-0.229px;">-7.62 mm</div>
<div class="t" style="left:736.50px;top:453.0px;">E</div>
<div class="t" style="left:40.60px;top:476.0px;">1</div>
<div class="t" style="left:99.50px;top:476.0px;letter-spacing:-0.600px;">12</div>
<div class="t" style="left:185.60px;top:476.0px;">~</div>
<svg style="left:290px;top:476px" width="16" height="16" viewBox="0 0 16 16"><path d="M1 8 H15.3" fill="none" stroke="#555" stroke-width="1.6"/><path d="M0.9 0.2 V15.8 M10.5 3.3 L15.5 8 L10.5 12.7" fill="none" stroke="#555" stroke-width="1.3"/></svg>
<div class="t" style="left:312.00px;top:477.0px;letter-spacing:0.100px;">Output</div>
<svg style="left:430px;top:476px" width="16" height="16" viewBox="0 0 16 16"><path d="M0.5 0.5 V15.5 M0.5 8 H15.5" fill="none" stroke="#555" stroke-width="1.3"/></svg>
<div class="t" style="left:451.60px;top:477.0px;letter-spacing:-0.533px;">Line</div>
<div class="t" style="left:568.30px;top:476.0px;letter-spacing:-0.367px;">5.08 mm</div>
<div class="t" style="left:653.00px;top:476.0px;letter-spacing:-0.300px;">7.62 mm</div>
<div class="t" style="left:736.50px;top:476.0px;">F</div>
<div class="t" style="left:40.60px;top:499.0px;">1</div>
<div class="t" style="left:99.50px;top:499.0px;letter-spacing:-0.600px;">13</div>
<div class="t" style="left:185.60px;top:499.0px;">~</div>
<svg style="left:290px;top:499px" width="16" height="16" viewBox="0 0 16 16"><path d="M0 8 H14.6" fill="none" stroke="#555" stroke-width="1.6"/><path d="M9.5 3.3 L14.5 8 L9.5 12.7 M15.4 0.2 V15.8" fill="none" stroke="#555" stroke-width="1.3"/></svg>
<div class="t" style="left:311.60px;top:500.0px;letter-spacing:-0.025px;">Input</div>
<svg style="left:430px;top:499px" width="16" height="16" viewBox="0 0 16 16"><path d="M0.5 0.5 V15.5 M0.5 8 H15.5" fill="none" stroke="#555" stroke-width="1.3"/></svg>
<div class="t" style="left:451.60px;top:500.0px;letter-spacing:-0.533px;">Line</div>
<div class="t" style="left:568.30px;top:499.0px;letter-spacing:-0.367px;">5.08 mm</div>
<div class="t" style="left:652.80px;top:499.0px;letter-spacing:-0.229px;">-7.62 mm</div>
<div class="t" style="left:736.50px;top:499.0px;">F</div>
<div class="t" style="left:40.60px;top:522.0px;">1</div>
<div class="t" style="left:99.50px;top:522.0px;letter-spacing:-0.600px;">14</div>
<div class="t" style="left:185.60px;top:522.0px;letter-spacing:-1.550px;">VCC</div>
<svg style="left:290px;top:522px" width="16" height="16" viewBox="0 0 16 16"><path d="M1.8 8 H12.4 M9.2 4.2 L13 8 L9.2 11.8" fill="none" stroke="#555" stroke-width="3.1" stroke-linecap="round" stroke-linejoin="round"/><path d="M15.5 0.5 V15.5" stroke="#555" stroke-width="1.3"/></svg>
<div class="t" style="left:311.60px;top:523.0px;letter-spacing:-0.080px;">Power input</div>
<svg style="left:430px;top:522px" width="16" height="16" viewBox="0 0 16 16"><path d="M0.5 0.5 V15.5 M0.5 8 H15.5" fill="none" stroke="#555" stroke-width="1.3"/></svg>
<div class="t" style="left:451.60px;top:523.0px;letter-spacing:-0.533px;">Line</div>
<div class="t" style="left:568.30px;top:522.0px;letter-spacing:-0.367px;">5.08 mm</div>
<div class="t" style="left:652.00px;top:522.0px;">0 mm</div>
<div class="t" style="left:736.50px;top:522.0px;">G</div>
<div class="a" style="left:39px;top:564px;width:22px;height:22px;background:#e1e1e1;border:1px solid #adadad"></div>
<svg style="left:43px;top:568px" width="14" height="14" viewBox="0 0 14 14"><path d="M7 0 V13.8 M0 7 H14" stroke="#444" stroke-width="2"/></svg>
<div class="a" style="left:78px;top:564px;width:22px;height:22px;background:#e1e1e1;border:1px solid #adadad"></div>
<svg style="left:82px;top:567px" width="14" height="15" viewBox="0 0 14 15"><path d="M0.9 2 H13 V3.8 H0.9 Z M4.8 0.8 H9.2 V2 H4.8 Z M1.9 5 H12.1 L11.4 13.6 Q11.3 14.8 10.1 14.8 H3.9 Q2.7 14.8 2.6 13.6 Z" fill="#4a4a4a"/></svg>
<div class="a" style="left:110px;top:561px;width:1px;height:29px;background:#6e6e6e"></div>
<div class="a" style="left:119px;top:569px;width:13px;height:13px;background:#fff;border:1px solid #333"></div>
<div class="t" style="left:135.70px;top:569.0px;letter-spacing:-0.100px;">Group by name</div>
<div class="a" style="left:236px;top:565px;width:86px;height:21px;background:#cccccc;border:1px solid #bfbfbf"></div>
<div class="t" style="left:239.50px;top:569.0px;letter-spacing:-0.292px;color:#838383">Group Selected</div>
<div class="a" style="left:341px;top:564px;width:22px;height:22px;background:#e1e1e1;border:1px solid #adadad"></div>
<svg style="left:344.6px;top:567.6px" width="16" height="16" viewBox="0 0 16 16"><g transform="scale(0.64)" fill="none" stroke="#444" stroke-width="3"><path d="M2.6 9.8 A9.6 9.6 0 0 1 20.6 7.4"/><path d="M22 1 V8.4 H14.6"/><path d="M21.4 14.2 A9.6 9.6 0 0 1 3.4 16.6"/><path d="M2 23 V15.6 H9.4"/></g></svg>
<div class="a" style="left:373px;top:561px;width:1px;height:29px;background:#6e6e6e"></div>
<div class="a" style="left:382px;top:569px;width:13px;height:13px;background:#fff;border:1px solid #333"></div>
<div class="t" style="left:399.00px;top:569.0px;letter-spacing:-0.050px;">Filter by unit:</div>
<div class="a" style="left:478px;top:564px;width:48px;height:23px;background:#e1e1e1;border:1px solid #adadad"></div>
<svg style="left:512.6px;top:573.5px" width="9" height="6" viewBox="0 0 9 6"><path d="M0.4 0.4 L4.45 4.5 L8.5 0.4" fill="none" stroke="#3c3c3c" stroke-width="1.2"/></svg>
<div class="a" style="left:666px;top:565px;width:73px;height:21px;background:#e1e1e1;border:1px solid #adadad"></div>
<div class="t" style="left:694.50px;top:569.0px;letter-spacing:-0.800px;">OK</div>
<div class="a" style="left:749px;top:565px;width:73px;height:21px;background:#e1e1e1;border:1px solid #adadad"></div>
<div class="t" style="left:767.70px;top:569.0px;letter-spacing:-0.300px;">Cancel</div>
<svg style="left:821px;top:589px" width="8" height="8" viewBox="0 0 8 8"><rect x="6" y="0" width="2" height="2" fill="#ababab"/><rect x="3" y="3" width="2" height="2" fill="#ababab"/><rect x="6" y="3" width="2" height="2" fill="#ababab"/><rect x="0" y="6" width="2" height="2" fill="#ababab"/><rect x="3" y="6" width="2" height="2" fill="#ababab"/><rect x="6" y="6" width="2" height="2" fill="#ababab"/></svg>
<div class="a" style="left:413px;top:206px;width:181px;height:314px;background:#f2f2f2;border:1px solid #cccccc;box-shadow:3px 3px 5px rgba(0,0,0,0.4)"></div>
<div class="a" style="left:416px;top:209px;width:22px;height:22px;background:#91c9f7"></div>
<svg style="left:416px;top:209px" width="22" height="22" viewBox="0 0 22 22"><path d="M6.3 10.6 L9.4 13.7 L15.8 7" fill="none" stroke="#404040" stroke-width="1.4"/></svg>
<div class="t" style="left:448.30px;top:213.0px;letter-spacing:0.175px;">Count</div>
<div class="a" style="left:416px;top:231px;width:22px;height:22px;background:#91c9f7"></div>
<svg style="left:416px;top:231px" width="22" height="22" viewBox="0 0 22 22"><path d="M6.3 10.6 L9.4 13.7 L15.8 7" fill="none" stroke="#404040" stroke-width="1.4"/></svg>
<div class="t" style="left:448.30px;top:235.0px;letter-spacing:0.140px;">Number</div>
<div class="a" style="left:416px;top:253px;width:22px;height:22px;background:#91c9f7"></div>
<svg style="left:416px;top:253px" width="22" height="22" viewBox="0 0 22 22"><path d="M6.3 10.6 L9.4 13.7 L15.8 7" fill="none" stroke="#404040" stroke-width="1.4"/></svg>
<div class="t" style="left:448.30px;top:257.0px;letter-spacing:-0.033px;">Name</div>
<div class="a" style="left:416px;top:275px;width:22px;height:22px;background:#91c9f7"></div>
<svg style="left:416px;top:275px" width="22" height="22" viewBox="0 0 22 22"><path d="M6.3 10.6 L9.4 13.7 L15.8 7" fill="none" stroke="#404040" stroke-width="1.4"/></svg>
<div class="t" style="left:448.30px;top:279.0px;letter-spacing:-0.279px;">Electrical Type</div>
<div class="a" style="left:416px;top:297px;width:22px;height:22px;background:#91c9f7"></div>
<svg style="left:416px;top:297px" width="22" height="22" viewBox="0 0 22 22"><path d="M6.3 10.6 L9.4 13.7 L15.8 7" fill="none" stroke="#404040" stroke-width="1.4"/></svg>
<div class="t" style="left:448.30px;top:301.0px;letter-spacing:-0.292px;">Graphic Style</div>
<div class="t" style="left:448.30px;top:323.0px;letter-spacing:0.050px;">Orientation</div>
<div class="t" style="left:448.30px;top:345.0px;letter-spacing:-0.213px;">Number Text Size</div>
<div class="t" style="left:448.30px;top:367.0px;letter-spacing:-0.408px;">Name Text Size</div>
<div class="a" style="left:416px;top:385px;width:22px;height:22px;background:#91c9f7"></div>
<svg style="left:416px;top:385px" width="22" height="22" viewBox="0 0 22 22"><path d="M6.3 10.6 L9.4 13.7 L15.8 7" fill="none" stroke="#404040" stroke-width="1.4"/></svg>
<div class="t" style="left:448.30px;top:389.0px;letter-spacing:-0.200px;">Length</div>
<div class="a" style="left:416px;top:407px;width:22px;height:22px;background:#91c9f7"></div>
<svg style="left:416px;top:407px" width="22" height="22" viewBox="0 0 22 22"><path d="M6.3 10.6 L9.4 13.7 L15.8 7" fill="none" stroke="#404040" stroke-width="1.4"/></svg>
<div class="t" style="left:447.70px;top:411.0px;letter-spacing:-0.111px;">X Position</div>
<div class="t" style="left:447.70px;top:433.0px;letter-spacing:-0.111px;">Y Position</div>
<div class="t" style="left:448.30px;top:455.0px;letter-spacing:-0.183px;">Visible</div>
<div class="a" style="left:416px;top:473px;width:22px;height:22px;background:#91c9f7"></div>
<svg style="left:416px;top:473px" width="22" height="22" viewBox="0 0 22 22"><path d="M6.3 10.6 L9.4 13.7 L15.8 7" fill="none" stroke="#404040" stroke-width="1.4"/></svg>
<div class="t" style="left:448.30px;top:477.0px;letter-spacing:-0.100px;">Unit</div>
<div class="t" style="left:448.30px;top:499.0px;letter-spacing:-0.087px;">De Morgan</div>
<svg style="left:410px;top:206px" width="13" height="21" viewBox="0 0 13 21"><path d="M0.4 0.5 V16.4 L4.1 13 L6.6 18.5 L9.1 17.5 L6.8 12.2 L11.4 12 Z" fill="#fff" stroke="#000" stroke-width="1" stroke-linejoin="miter"/></svg>
<div class="a" style="left:1px;top:623px;width:840px;height:1px;background:#f8f8f8"></div>
<div class="a" style="left:0px;top:0px;width:842px;height:625px;border:1px solid #333;border-left-color:#26272b;border-right-color:#9a9a9a"></div>
<div class="a" style="left:841px;top:0px;width:1px;height:2px;background:#333"></div>
</body></html>
